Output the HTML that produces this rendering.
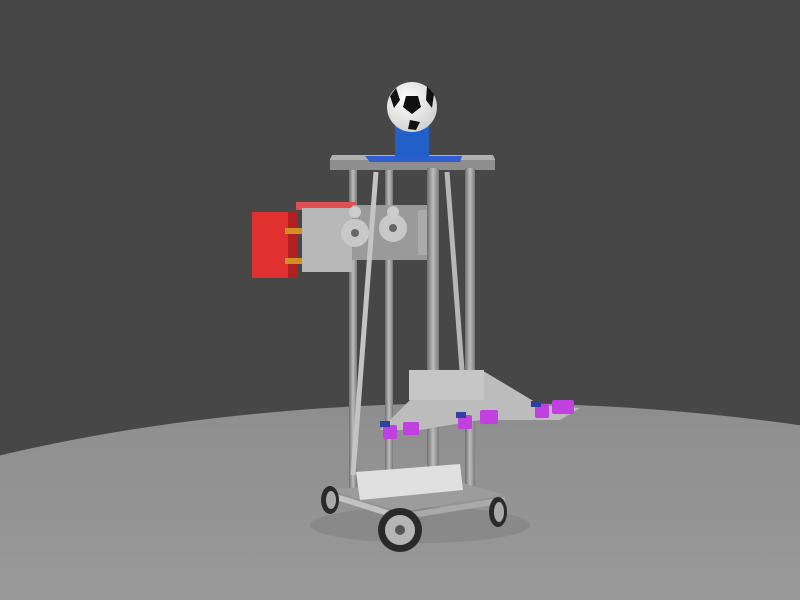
<!DOCTYPE html>
<html><head><style>html,body{margin:0;padding:0;background:#474747;overflow:hidden;width:800px;height:600px}svg{display:block}</style></head>
<body>
<svg width="800" height="600" viewBox="0 0 800 600" xmlns="http://www.w3.org/2000/svg">
<defs>
<linearGradient id="fl" x1="0" y1="0" x2="0" y2="1"><stop offset="0" stop-color="#8e8e8e"/><stop offset="0.5" stop-color="#a2a2a2"/></linearGradient>
<linearGradient id="post" x1="0" y1="0" x2="1" y2="0"><stop offset="0" stop-color="#6e6e6e"/><stop offset=".5" stop-color="#bdbdbd"/><stop offset="1" stop-color="#7a7a7a"/></linearGradient>
<radialGradient id="ball" cx=".4" cy=".35" r=".7"><stop offset="0" stop-color="#fff"/><stop offset="1" stop-color="#cfcfcf"/></radialGradient>
</defs>
<rect width="800" height="600" fill="#474747"/>
<ellipse cx="480" cy="760" rx="920" ry="357" fill="url(#fl)"/>
<ellipse cx="420" cy="525" rx="110" ry="18" fill="#7d7d7d" opacity=".5"/>
<rect x="349" y="168" width="8" height="320" fill="url(#post)"/>
<rect x="385" y="168" width="8" height="320" fill="url(#post)"/>
<rect x="252" y="212" width="44" height="66" fill="#e03030"/>
<rect x="288" y="212" width="10" height="66" fill="#b02020"/>
<rect x="285" y="228" width="18" height="6" fill="#d09020"/>
<rect x="285" y="258" width="18" height="6" fill="#d09020"/>
<rect x="296" y="202" width="60" height="8" fill="#e05050"/>
<rect x="302" y="208" width="50" height="64" fill="#b8b8b8"/>
<rect x="352" y="205" width="75" height="55" fill="#9a9a9a"/>
<circle cx="355" cy="233" r="14" fill="#c8c8c8"/><circle cx="355" cy="233" r="4" fill="#666"/>
<circle cx="393" cy="228" r="14" fill="#c8c8c8"/><circle cx="393" cy="228" r="4" fill="#666"/>
<circle cx="355" cy="212" r="6" fill="#ccc"/><circle cx="393" cy="212" r="6" fill="#ccc"/>
<rect x="418" y="210" width="10" height="45" fill="#aaa"/>
<polygon points="330,158 495,158 495,170 330,170" fill="#8e8e8e"/>
<polygon points="332,155 493,155 495,160 330,160" fill="#b0b0b0"/>
<polygon points="365,156 462,156 460,162 370,162" fill="#2f5fd0"/>
<rect x="427" y="168" width="12" height="320" fill="url(#post)"/>
<rect x="465" y="168" width="10" height="320" fill="url(#post)"/>
<line x1="376" y1="172" x2="353" y2="475" stroke="#c4c4c4" stroke-width="5"/>
<line x1="447" y1="172" x2="462" y2="370" stroke="#b6b6b6" stroke-width="5"/>
<rect x="395" y="125" width="34" height="33" fill="#2060c8"/>
<ellipse cx="412" cy="126" rx="17" ry="4" fill="#3a78e0"/>
<circle cx="412" cy="107" r="25" fill="url(#ball)"/>
<polygon points="406,96 418,96 421,107 412,114 403,107" fill="#111"/>
<polygon points="390,96 396,88 400,100 394,108" fill="#111"/>
<polygon points="427,86 434,94 432,108 426,100" fill="#111"/>
<polygon points="410,120 420,122 416,130 408,129" fill="#111"/>
<polygon points="410,372 485,372 540,405 580,408 560,420 480,420 420,430 380,430 410,400" fill="#bcbcbc"/>
<rect x="409" y="370" width="75" height="30" fill="#c6c6c6"/>
<g fill="#c040e0">
<rect x="383" y="425" width="14" height="14" rx="2"/>
<rect x="403" y="422" width="16" height="13" rx="2"/>
<rect x="458" y="415" width="14" height="14" rx="2"/>
<rect x="480" y="410" width="18" height="14" rx="2"/>
<rect x="535" y="404" width="14" height="14" rx="2"/>
<rect x="552" y="400" width="22" height="14" rx="2"/>
</g>
<rect x="380" y="421" width="10" height="6" fill="#3040a0"/>
<rect x="456" y="412" width="10" height="6" fill="#3040a0"/>
<rect x="531" y="401" width="10" height="6" fill="#3040a0"/>
<polygon points="330,490 445,478 505,495 400,512" fill="#9c9c9c"/>
<polygon points="330,492 400,514 400,520 330,498" fill="#c2c2c2"/>
<polygon points="400,514 505,497 505,503 400,520" fill="#aaa"/>
<polygon points="356,472 460,464 463,490 360,500" fill="#e0e0e0"/>
<ellipse cx="330" cy="500" rx="9" ry="14" fill="#2a2a2a"/><ellipse cx="331" cy="500" rx="5" ry="9" fill="#aaa"/>
<ellipse cx="498" cy="512" rx="9" ry="15" fill="#2a2a2a"/><ellipse cx="499" cy="512" rx="5" ry="10" fill="#aaa"/>
<circle cx="400" cy="530" r="22" fill="#2a2a2a"/><circle cx="400" cy="530" r="15" fill="#b5b5b5"/><circle cx="400" cy="530" r="5" fill="#555"/>
</svg>
</body></html>
